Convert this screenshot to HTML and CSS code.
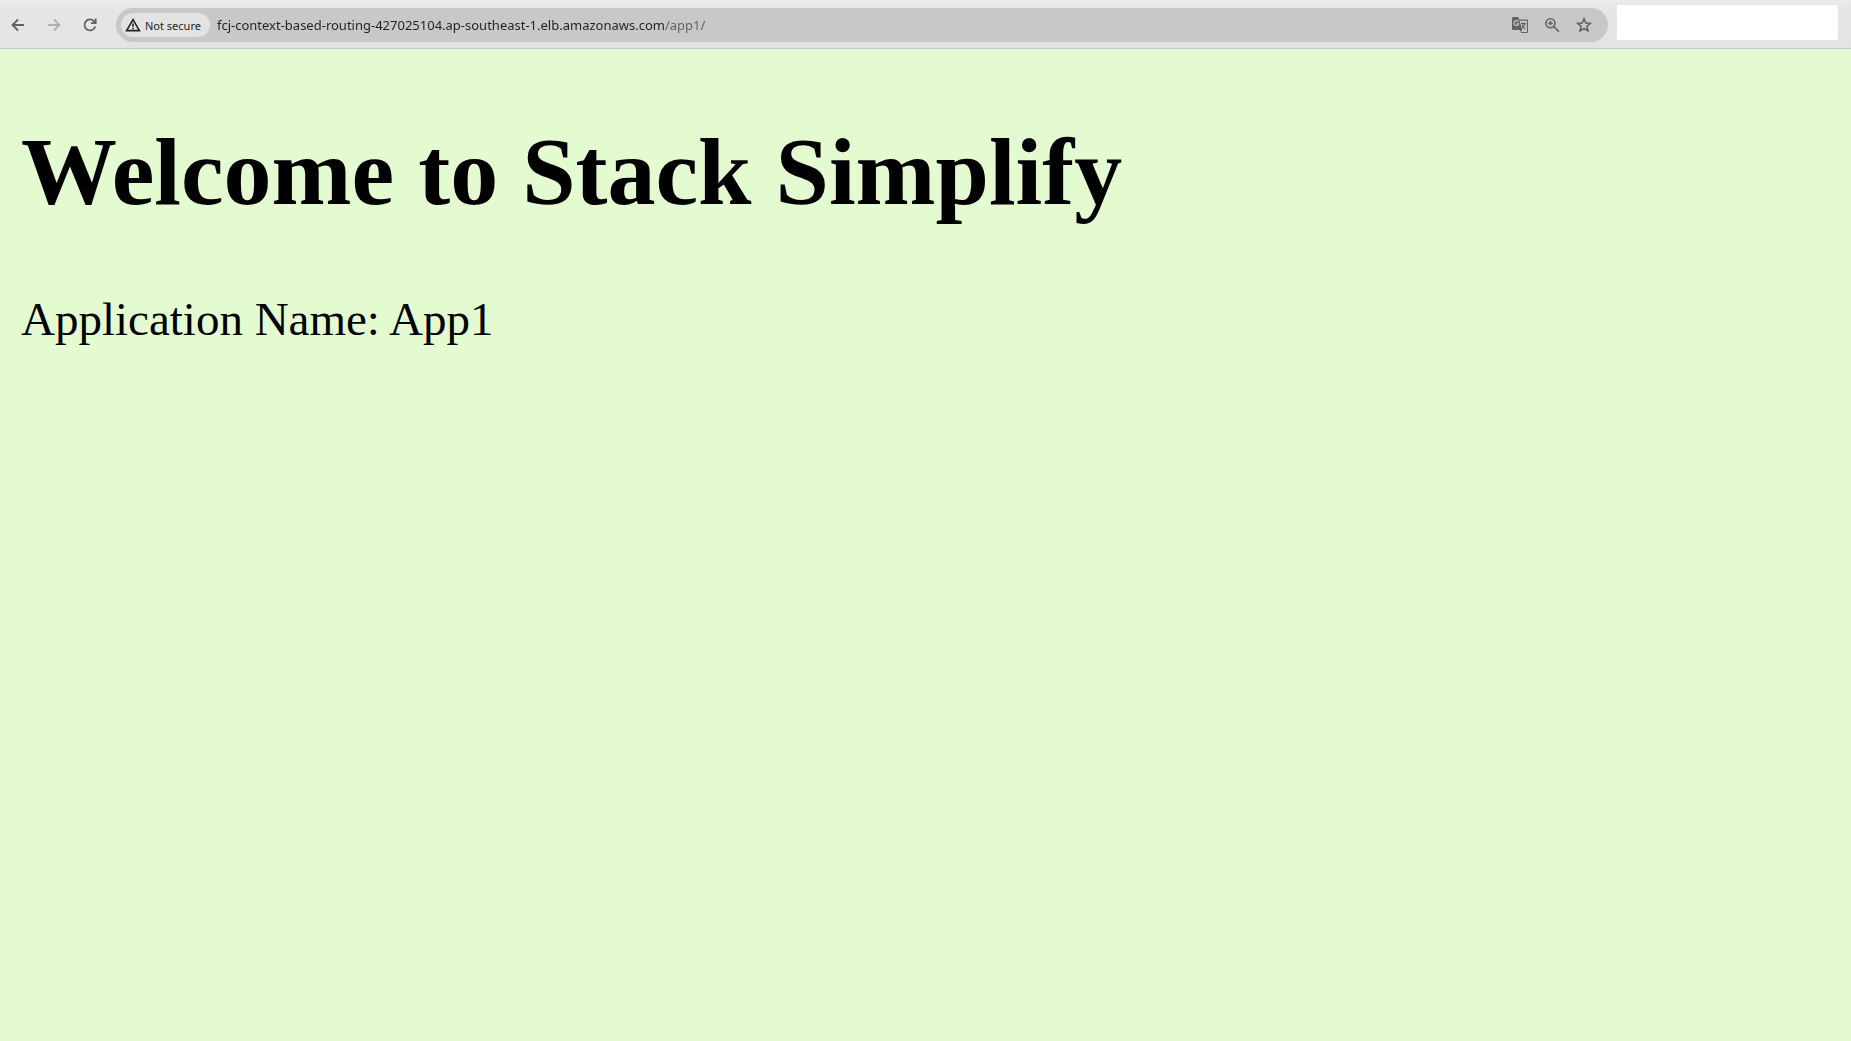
FILE: index.html
```html
<!DOCTYPE html>
<html lang="en">
<head>
<meta charset="utf-8">
<meta name="viewport" content="width=device-width, initial-scale=1">
<title>Stack Simplify</title>
<link rel="stylesheet" href="styles.css">
</head>
<body>
<header class="toolbar">
  <nav class="nav" aria-label="Browser navigation">
    <button class="icon-btn" type="button" aria-label="Back">
      <svg viewBox="0 0 16 16"><path d="M14 8H3M8 2.5L2.5 8L8 13.5"/></svg>
    </button>
    <button class="icon-btn icon-btn--off" type="button" aria-label="Forward" disabled>
      <svg viewBox="0 0 16 16"><path d="M2 8H13M8 2.5L13.5 8L8 13.5"/></svg>
    </button>
    <button class="icon-btn" type="button" aria-label="Reload">
      <svg viewBox="0 0 16 16"><path d="M13.3 9.4A5.5 5.5 0 1 1 12.4 4.6L13.6 6M13.7 1.6V6.2H9"/></svg>
    </button>
  </nav>
  <form class="omnibox">
    <button class="chip" type="button">
      <svg viewBox="0 0 16 16"><path d="M8 2.6L14.4 13.6H1.6Z"/><path d="M8 6.4V9.8M8 10.8V12.2"/></svg>
      Not secure
    </button>
    <input class="url" type="text" aria-label="Address" value="fcj-context-based-routing-427025104.ap-southeast-1.elb.amazonaws.com/app1/">
    <button class="icon-btn" type="button" aria-label="Translate this page">
      <svg class="filled" viewBox="0 0 16 16"><path fill-rule="evenodd" d="M1 0H6.2L7 2.6H15Q16 2.6 16 3.6V15Q16 16 15 16H9L8 13H1Q0 13 0 12V1Q0 0 1 0ZM7.4 3.8L10.4 13L8.9 14.9H14.9V3.8Z"/><path class="cut" d="M6.2 4.6A2.4 2.4 0 1 0 6.6 6.8H4.4"/><path class="line" d="M8.8 6.6H14M11.4 5.4V6.6M13 6.6Q12.4 9 10 10.6M10 8Q11.4 10.4 13.2 12"/></svg>
    </button>
    <button class="icon-btn" type="button" aria-label="Zoom">
      <svg viewBox="0 0 16 16"><circle cx="6.4" cy="6.2" r="4.5"/><path d="M9.8 9.6L15 14.8M6.4 4V8.4M4.2 6.2H8.6"/></svg>
    </button>
    <button class="icon-btn" type="button" aria-label="Bookmark this page">
      <svg viewBox="0 0 16 16"><path d="M8 1.8L9.8 6L14.4 6.4L10.9 9.4L12 13.9L8 11.5L4 13.9L5.1 9.4L1.6 6.4L6.2 6Z"/></svg>
    </button>
  </form>
  <div class="blank"></div>
</header>
<main class="page">
  <h1 class="title">Welcome to Stack Simplify</h1>
  <p class="text">Application Name: App1</p>
</main>
</body>
</html>
```
FILE: styles.css
```css
* {
  box-sizing: border-box;
}

body {
  display: flex;
  flex-direction: column;
  min-height: 100vh;
  margin: 0;
  background: #e4fad1;
  color: #000;
  font-family: "Liberation Serif", "Times New Roman", serif;
}

.toolbar {
  display: flex;
  align-items: center;
  gap: 9px;
  height: 49px;
  padding: 2px 13px 0 4px;
  border-bottom: 1px solid #c6c6ca;
  background: linear-gradient(#ebebeb, #e7e7e7 8px, #e3e3e3);
  font-family: "Noto Sans", "Open Sans", sans-serif;
}

.nav {
  display: flex;
  gap: 8px;
  width: 103px;
}

.icon-btn {
  display: grid;
  place-items: center;
  flex: none;
  width: 28px;
  height: 28px;
  padding: 0;
  border: 0;
  background: none;
  color: #5f6266;
}

.icon-btn--off {
  color: #afb0b1;
}

.icon-btn svg,
.chip svg {
  width: 16px;
  height: 16px;
  fill: none;
  stroke: currentColor;
  stroke-width: 1.8;
}

.chip svg,
.omnibox .icon-btn svg {
  stroke-width: 1.6;
}

.omnibox .icon-btn .filled {
  fill: currentColor;
  stroke: none;
}

.filled .cut,
.filled .line {
  fill: none;
  stroke-width: 1.2;
}

.filled .cut {
  stroke: #c8c8c8;
}

.filled .line {
  stroke: currentColor;
}

.omnibox {
  display: flex;
  flex: 1;
  align-items: center;
  gap: 4px;
  height: 34px;
  padding: 0 10px 0 5px;
  border-radius: 17px;
  background: #c8c8c8;
}

.chip {
  display: flex;
  flex: none;
  align-items: center;
  gap: 4px;
  height: 24px;
  padding: 0 9px 0 4px;
  border: 0;
  border-radius: 12px;
  background: #e3e3e3;
  color: #202124;
  font-family: inherit;
  font-size: 11px;
}

.url {
  flex: 1;
  min-width: 0;
  padding: 0 3px;
  border: 0;
  outline: 0;
  background: linear-gradient(to right, #202124 450px, #5c5d5f 450px);
  background-clip: text;
  color: transparent;
  font-family: inherit;
  font-size: 13px;
}

.blank {
  flex: none;
  width: 221px;
  height: 35px;
  margin-bottom: 5px;
  background: #fff;
}

.page {
  padding: 4px 21px;
}

.title {
  margin: 64px 0;
  font-size: 96px;
  line-height: 110px;
}

.text {
  margin: 0;
  font-size: 47px;
  line-height: 56px;
}
```
